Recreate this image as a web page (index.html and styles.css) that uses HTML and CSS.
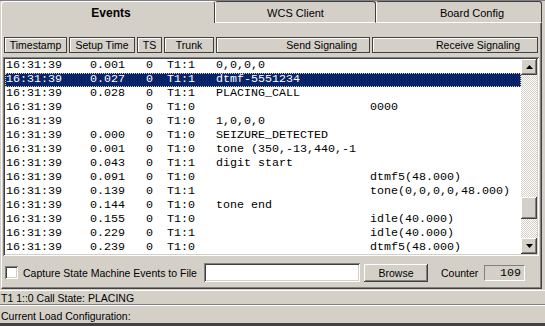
FILE: index.html
```html
<!DOCTYPE html>
<html>
<head>
<meta charset="utf-8">
<link rel="stylesheet" href="styles.css">
</head>
<body>
<div class="window">
  <div class="tabstrip">
    <div class="tab active"><span>Events</span></div>
    <div class="tab inactive wcs"><span>WCS Client</span></div>
    <div class="tab inactive board"><span>Board Config</span></div>
  </div>
  <div class="pane">
    <div class="colhead">
      <div class="hc h-time">Timestamp</div>
      <div class="hc h-setup">Setup Time</div>
      <div class="hc h-ts">TS</div>
      <div class="hc h-trunk">Trunk</div>
      <div class="hc h-send">Send Signaling</div>
      <div class="hc h-recv"><span class="clip">Receive Signaling</span></div>
    </div>
    <div class="listbox">
      <div class="rows">
        <div class="row"><span class="f-time">16:31:39</span><span class="f-setup">0.001</span><span class="f-ts">0</span><span class="f-trunk">T1:1</span><span class="f-send">0,0,0,0</span><span class="f-recv"></span></div>
        <div class="row sel"><span class="f-time">16:31:39</span><span class="f-setup">0.027</span><span class="f-ts">0</span><span class="f-trunk">T1:1</span><span class="f-send">dtmf-5551234</span><span class="f-recv"></span></div>
        <div class="row"><span class="f-time">16:31:39</span><span class="f-setup">0.028</span><span class="f-ts">0</span><span class="f-trunk">T1:1</span><span class="f-send">PLACING_CALL</span><span class="f-recv"></span></div>
        <div class="row"><span class="f-time">16:31:39</span><span class="f-setup"></span><span class="f-ts">0</span><span class="f-trunk">T1:0</span><span class="f-send"></span><span class="f-recv">0000</span></div>
        <div class="row"><span class="f-time">16:31:39</span><span class="f-setup"></span><span class="f-ts">0</span><span class="f-trunk">T1:0</span><span class="f-send">1,0,0,0</span><span class="f-recv"></span></div>
        <div class="row"><span class="f-time">16:31:39</span><span class="f-setup">0.000</span><span class="f-ts">0</span><span class="f-trunk">T1:0</span><span class="f-send">SEIZURE_DETECTED</span><span class="f-recv"></span></div>
        <div class="row"><span class="f-time">16:31:39</span><span class="f-setup">0.001</span><span class="f-ts">0</span><span class="f-trunk">T1:0</span><span class="f-send">tone (350,-13,440,-1</span><span class="f-recv"></span></div>
        <div class="row"><span class="f-time">16:31:39</span><span class="f-setup">0.043</span><span class="f-ts">0</span><span class="f-trunk">T1:1</span><span class="f-send">digit start</span><span class="f-recv"></span></div>
        <div class="row"><span class="f-time">16:31:39</span><span class="f-setup">0.091</span><span class="f-ts">0</span><span class="f-trunk">T1:0</span><span class="f-send"></span><span class="f-recv">dtmf5(48.000)</span></div>
        <div class="row"><span class="f-time">16:31:39</span><span class="f-setup">0.139</span><span class="f-ts">0</span><span class="f-trunk">T1:1</span><span class="f-send"></span><span class="f-recv">tone(0,0,0,0,48.000)</span></div>
        <div class="row"><span class="f-time">16:31:39</span><span class="f-setup">0.144</span><span class="f-ts">0</span><span class="f-trunk">T1:0</span><span class="f-send">tone end</span><span class="f-recv"></span></div>
        <div class="row"><span class="f-time">16:31:39</span><span class="f-setup">0.155</span><span class="f-ts">0</span><span class="f-trunk">T1:0</span><span class="f-send"></span><span class="f-recv">idle(40.000)</span></div>
        <div class="row"><span class="f-time">16:31:39</span><span class="f-setup">0.229</span><span class="f-ts">0</span><span class="f-trunk">T1:1</span><span class="f-send"></span><span class="f-recv">idle(40.000)</span></div>
        <div class="row"><span class="f-time">16:31:39</span><span class="f-setup">0.239</span><span class="f-ts">0</span><span class="f-trunk">T1:0</span><span class="f-send"></span><span class="f-recv">dtmf5(48.000)</span></div>
      </div>
      <div class="vscroll">
        <div class="sb-btn"><svg width="7" height="4" viewBox="0 0 7 4"><polygon points="3.5,0 7,4 0,4" fill="#000"/></svg></div>
        <div class="sb-gap1"></div>
        <div class="sb-thumb"></div>
        <div class="sb-gap2"></div>
        <div class="sb-btn"><svg width="7" height="4" viewBox="0 0 7 4"><polygon points="0,0 7,0 3.5,4" fill="#000"/></svg></div>
      </div>
    </div>
    <div class="controls">
      <div class="checkbox"></div>
      <div class="cap-label">Capture State Machine Events to File</div>
      <div class="textfield"></div>
      <div class="button">Browse</div>
      <div class="counter-label">Counter</div>
      <div class="counter">109</div>
    </div>
  </div>
  <div class="status s1">T1 1::0 Call State: PLACING</div>
  <div class="status s2">Current Load Configuration:</div>
</div>
</body>
</html>
```
FILE: styles.css
```css
* { box-sizing: border-box; }
html, body { margin: 0; padding: 0; }
body {
  width: 545px;
  height: 326px;
  overflow: hidden;
  background: #d4d0c8;
  font-family: "Liberation Sans", Arial, sans-serif;
  font-size: 10.5px;
  color: #000;
}
.window {
  width: 545px;
  height: 326px;
  display: flex;
  flex-direction: column;
  border-top: 1px solid #808080;
  border-bottom: 3px solid #404040;
}
.tabstrip {
  display: flex;
  height: 22px;
  padding-left: 1px;
  flex: none;
}
.tab {
  height: 22px;
  display: flex;
  align-items: center;
  justify-content: center;
  border-left: 1px solid #fff;
  border-right: 1px solid #404040;
  border-radius: 3px 3px 0 0;
  white-space: nowrap;
}
.tab.active {
  width: 214px;
  border-top: 1px solid #fff;
  font-weight: bold;
  font-size: 12px;
  padding-left: 6px;
}
.tab.inactive {
  border-top: 1px solid #404040;
  border-bottom: 1px solid #fff;
  padding-top: 1px;
  font-size: 11px;
}
.wcs { width: 161px; }
.board { width: 166px; padding-left: 26px; }

.pane {
  flex: none;
  height: 266px;
  width: 541px;
  margin-left: 1px;
  border-left: 1px solid #fff;
  border-right: 1px solid #404040;
  border-bottom: 1px solid #404040;
  box-shadow: inset -1px -1px #808080;
  padding: 14px 2px 0 1px;
  display: flex;
  flex-direction: column;
}
.colhead {
  display: flex;
  gap: 2px;
  margin-left: 1px;
  height: 16px;
  flex: none;
}
.hc {
  border: 1px solid #404040;
  box-shadow: inset 1px 1px #fff;
  display: flex;
  align-items: center;
  justify-content: center;
  overflow: hidden;
  white-space: nowrap;
}
.h-time { width: 63px; }
.h-setup { width: 66px; }
.h-ts { width: 25px; }
.h-trunk { width: 50px; }
.h-send { width: 154px; justify-content: flex-end; padding-right: 12px; }
.h-recv { width: 166px; justify-content: flex-start; padding-left: 63px; }
.clip { display: inline-block; width: 86px; overflow: hidden; }

.listbox {
  margin-top: 4px;
  height: 199px;
  flex: none;
  display: flex;
  padding: 2px;
  background: #fff;
  box-shadow: inset 1px 1px #808080, inset -1px -1px #fff, inset 2px 2px #404040, inset -2px -2px #d4d0c8;
}
.rows {
  flex: 1;
  overflow: hidden;
  font-family: "Liberation Mono", "Courier New", monospace;
  font-size: 11.67px;
}
.row {
  height: 14px;
  line-height: 13px;
  display: flex;
  padding-left: 1px;
  white-space: pre;
}
.row.sel {
  background: #0a246a;
  color: #fff;
  outline: 1px dotted #d8d890;
  outline-offset: -1px;
}
.f-time { width: 84px; flex: none; }
.f-setup { width: 56px; flex: none; }
.f-ts { width: 21px; flex: none; }
.f-trunk { width: 49px; flex: none; }
.f-send { width: 154px; flex: none; overflow: hidden; }
.f-recv { flex: 1; }

.vscroll {
  width: 16px;
  flex: none;
  display: flex;
  flex-direction: column;
  background: repeating-conic-gradient(#ffffff 0 25%, #d4d0c8 0 50%) 0 0 / 2px 2px;
}
.sb-btn, .sb-thumb, .button {
  background: #d4d0c8;
  box-shadow: inset -1px -1px #404040, inset 1px 1px #fff, inset -2px -2px #808080, inset 2px 2px #d4d0c8;
}
.sb-btn {
  height: 16px;
  flex: none;
  display: flex;
  align-items: center;
  justify-content: center;
}
.sb-btn svg { display: block; }
.sb-gap1 { height: 122px; flex: none; }
.sb-thumb { height: 22px; flex: none; }
.sb-gap2 { flex: 1; }

.controls {
  margin-top: 7px;
  height: 19px;
  flex: none;
  display: flex;
  align-items: center;
}
.checkbox {
  width: 13px;
  height: 13px;
  margin-left: 2px;
  background: #fff;
  box-shadow: inset 1px 1px #808080, inset -1px -1px #fff, inset 2px 2px #404040, inset -2px -2px #d4d0c8;
}
.cap-label {
  width: 186px;
  padding-left: 5px;
  white-space: nowrap;
  overflow: hidden;
}
.textfield {
  width: 156px;
  height: 19px;
  background: #fff;
  box-shadow: inset 1px 1px #808080, inset -1px -1px #fff, inset 2px 2px #404040, inset -2px -2px #d4d0c8;
}
.button {
  margin-left: 4px;
  width: 64px;
  height: 18px;
  display: flex;
  align-items: center;
  justify-content: center;
}
.counter-label {
  margin-left: 13px;
  width: 43px;
}
.counter {
  width: 41px;
  height: 16px;
  border-top: 1px solid #808080;
  border-left: 1px solid #808080;
  border-bottom: 1px solid #fff;
  border-right: 1px solid #fff;
  font-family: "Liberation Mono", "Courier New", monospace;
  font-size: 11.67px;
  text-align: right;
  padding-right: 3px;
  line-height: 14px;
}

.status {
  flex: none;
  padding-left: 1px;
  white-space: nowrap;
  display: flex;
  align-items: center;
}
.s1 {
  margin-top: 1px;
  height: 15px;
  border-top: 1px solid #fff;
  border-bottom: 1px solid #808080;
}
.s2 {
  height: 18px;
  border-top: 1px solid #fff;
  padding-top: 3px;
}
```
